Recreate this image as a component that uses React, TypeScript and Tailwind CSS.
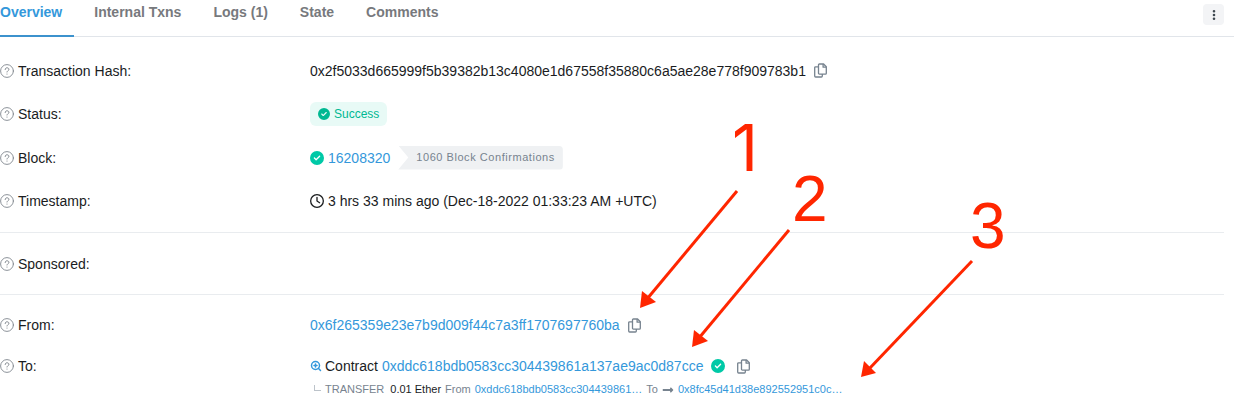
import type { ReactNode } from "react";
import { ZoomIn } from "lucide-react";
import { FaCircleCheck, FaEllipsisVertical, FaRegClock } from "react-icons/fa6";
import { FaLongArrowAltRight } from "react-icons/fa";

const tabs = ["Overview", "Internal Txns", "Logs (1)", "State", "Comments"];

const arrows = [
  { line: "M737 191 L647 299", head: "M640 308 L642 291 L656 302 Z" },
  { line: "M789 230 L699 338", head: "M692 347 L694 330 L708 341 Z" },
  { line: "M972 261 L869 369", head: "M861 377 L864 361 L876 373 Z" },
];

function HelpIcon() {
  return (
    <svg viewBox="0 0 14 14" className="h-3.5 w-3.5 text-[#7f868d]" fill="none" stroke="currentColor" strokeLinecap="round">
      <circle cx="7" cy="7" r="6.4" strokeWidth="0.9" />
      <path d="M5.2 5.5c0-1 .7-1.7 1.8-1.7s1.9.6 1.9 1.6c0 1.3-1.9 1.3-1.9 2.6" strokeWidth="1" />
      <circle cx="7" cy="10" r="0.6" fill="currentColor" stroke="none" />
    </svg>
  );
}

function CopyButton({ label }: { label: string }) {
  return (
    <button type="button" aria-label={label} className="text-[#77838f]">
      <svg viewBox="0 0 13 15" className="h-[15px] w-[13px]" fill="none" stroke="currentColor" strokeWidth="1.3" strokeLinejoin="round">
        <path d="M5.4 1h4.2l2.7 2.7v6.5a.9.9 0 0 1-.9.9h-6a.9.9 0 0 1-.9-.9V1.9a.9.9 0 0 1 .9-.9z" />
        <path d="M9.1 1v3.2h3.2" />
        <path d="M4.5 3.8H1.6a.9.9 0 0 0-.9.9v8.4a.9.9 0 0 0 .9.9h5.8a.9.9 0 0 0 .9-.9v-2" />
      </svg>
    </button>
  );
}

function Row({ label, className, children }: { label: string; className: string; children?: ReactNode }) {
  return (
    <div className={`flex ${className}`}>
      <dt className="flex h-[22px] w-[310px] shrink-0 items-center gap-1">
        <HelpIcon />
        {label}
      </dt>
      <dd className="min-w-0 flex-1">{children}</dd>
    </div>
  );
}

export default function App() {
  return (
    <main className="relative overflow-hidden bg-white pb-3 font-['Liberation_Sans',Arial,sans-serif] text-sm text-[#1a1c1e]">
      <header className="flex h-[37px] items-start justify-between border-b border-[#e1e5ea]">
        <nav className="flex h-[37px] gap-5 font-bold text-[#77797d]">
          {tabs.map((tab) => (
            <a
              key={tab}
              href="#"
              className={
                tab === "Overview"
                  ? "border-b-2 border-[#3c92cd] pt-0.5 pr-3 text-[#3498db]"
                  : "pt-0.5 pr-3"
              }
            >
              {tab}
            </a>
          ))}
        </nav>
        <button
          type="button"
          aria-label="More options"
          className="mt-1 mr-2.5 flex h-[21px] w-[21px] items-center justify-center rounded bg-[#f3f4f6] text-[#3f4850]"
        >
          <FaEllipsisVertical className="h-3 w-3" />
        </button>
      </header>

      <dl>
        <div className="mr-2.5 border-b border-[#e9ecef] pt-3 pb-[11px]">
          <Row label="Transaction Hash:" className="h-[43px] items-center">
            <div className="flex items-center gap-2">
              0x2f5033d665999f5b39382b13c4080e1d67558f35880c6a5ae28e778f909783b1
              <CopyButton label="Copy transaction hash" />
            </div>
          </Row>
          <Row label="Status:" className="h-[43px] items-center">
            <span className="inline-flex h-6 items-center gap-1 rounded-md bg-[#e8faf6] px-2 text-xs text-[#00b892]">
              <FaCircleCheck className="h-3 w-3" />
              Success
            </span>
          </Row>
          <Row label="Block:" className="h-[45px] items-center">
            <div className="flex items-center">
              <FaCircleCheck className="mr-1 h-3.5 w-3.5 text-[#00c9a7]" />
              <a href="#" className="text-[#3498db]">16208320</a>
              <span className="ml-2 flex h-6 items-center rounded-r bg-[#eff1f3] pr-2 pl-[18px] text-[11px] tracking-wider text-[#77838f] [clip-path:polygon(0_0,100%_0,100%_100%,0_100%,10px_50%)]">
                1060 Block Confirmations
              </span>
            </div>
          </Row>
          <Row label="Timestamp:" className="h-[41px] items-center">
            <div className="flex items-center gap-1">
              <FaRegClock className="h-3.5 w-3.5" />
              3 hrs 33 mins ago (Dec-18-2022 01:33:23 AM +UTC)
            </div>
          </Row>
        </div>
        <div className="mr-2.5 border-b border-[#e9ecef]">
          <Row label="Sponsored:" className="h-[61px] items-center" />
        </div>
        <div className="pt-2">
          <Row label="From:" className="h-11 items-center">
            <div className="flex items-center gap-2">
              <a href="#" className="text-[#3498db]">0x6f265359e23e7b9d009f44c7a3ff1707697760ba</a>
              <CopyButton label="Copy sender address" />
            </div>
          </Row>
          <Row label="To:" className="items-start pt-2">
            <div className="flex h-[22px] items-center">
              <ZoomIn className="mr-[3px] h-3 w-3 text-[#3498db]" strokeWidth={3} />
              <span className="mr-1">Contract</span>
              <a href="#" className="mr-2 text-[#3498db]">0xddc618bdb0583cc304439861a137ae9ac0d87cce</a>
              <FaCircleCheck className="mr-3 h-3.5 w-3.5 text-[#00c9a7]" />
              <CopyButton label="Copy contract address" />
            </div>
            <div className="flex h-[26px] items-center gap-1 pl-1 text-[11px] text-[#77838f]">
              <span className="mb-1 h-1.5 w-[7px] border-b border-l border-[#bcc3ca]" />
              <span className="mr-0.5">TRANSFER</span>
              <span className="text-[#1a1c1e]">0.01 Ether</span>
              <span>From</span>
              <a href="#" className="text-[#3498db]">0xddc618bdb0583cc304439861…</a>
              <span>To</span>
              <FaLongArrowAltRight className="h-3 w-3" />
              <a href="#" className="text-[#3498db]">0x8fc45d41d38e892552951c0c…</a>
            </div>
          </Row>
        </div>
      </dl>

      <div className="pointer-events-none absolute top-0 left-0 text-[64px] leading-none text-[#ff2600]">
        <svg width="1100" height="400" viewBox="0 0 1100 400">
          {arrows.map((arrow) => (
            <g key={arrow.line}>
              <path d={arrow.line} stroke="currentColor" strokeWidth="3" />
              <path d={arrow.head} fill="currentColor" />
            </g>
          ))}
        </svg>
        <span className="absolute top-[116px] left-[732px] font-['Inter',sans-serif]">1</span>
        <span className="absolute top-[167px] left-[792px]">2</span>
        <span className="absolute top-[194px] left-[970px]">3</span>
      </div>
    </main>
  );
}
